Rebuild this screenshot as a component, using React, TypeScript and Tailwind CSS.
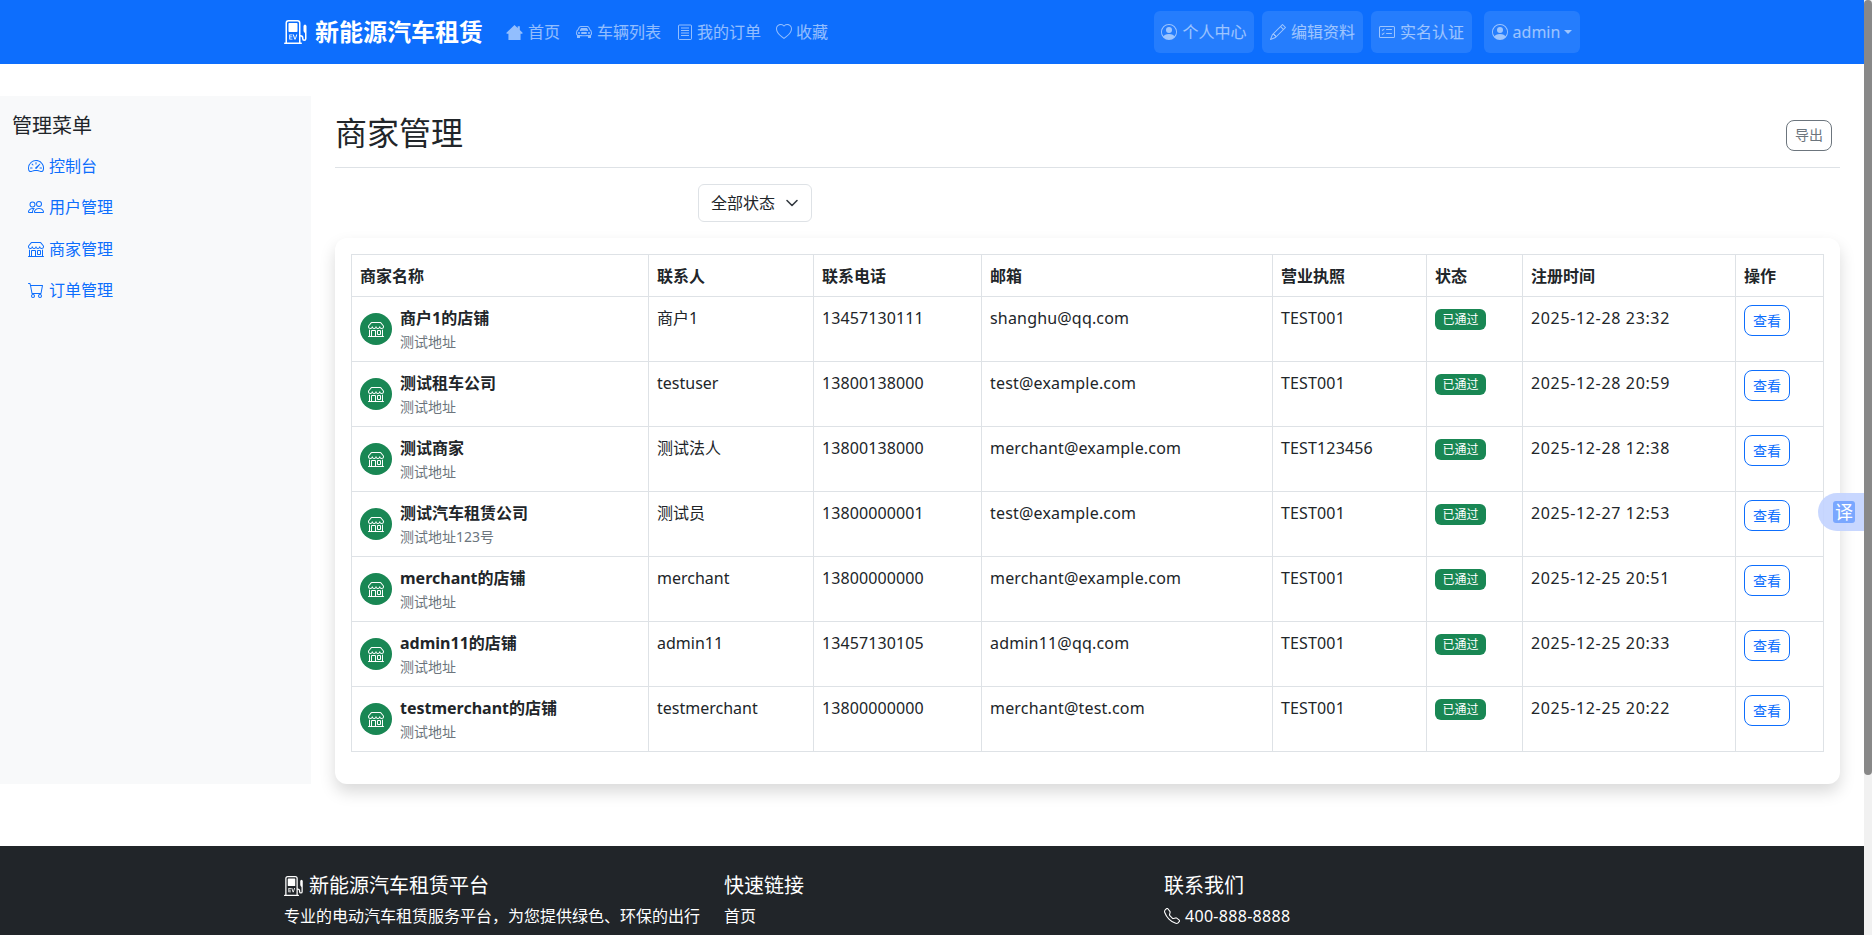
import type { ReactNode } from 'react';
import {
  BsCardChecklist,
  BsCarFront,
  BsCart,
  BsEvStation,
  BsHeart,
  BsPencil,
  BsPeople,
  BsPersonCircle,
  BsShop,
  BsSpeedometer2,
  BsTelephone,
} from 'react-icons/bs';

function HouseIcon() {
  return (
    <svg viewBox="0 0 16 16" className="h-[17px] w-[17px]" fill="currentColor">
      <path d="M8 1 11 3.8V2.2h2v3.5l2.8 2.7-.6.7h-1.5v5.9H2.3V9.1H.8l-.6-.7z" />
    </svg>
  );
}

function OrderIcon() {
  return (
    <svg viewBox="0 0 16 16" className="h-4 w-4" fill="none" stroke="currentColor">
      <rect x="1.5" y="1" width="13" height="14.5" rx="1" />
      <path d="M4 4h8M4 6.5h8M4 9h8M4 11.5h8" />
    </svg>
  );
}

const navLinks = [
  { label: '首页', icon: <HouseIcon />, gap: 'gap-[5px]', pad: 'pl-2 pr-[8px]' },
  { label: '车辆列表', icon: <BsCarFront />, gap: 'gap-[5px]', pad: 'px-2' },
  { label: '我的订单', icon: <OrderIcon />, gap: 'gap-[4px]', pad: 'pl-2 pr-[7px]' },
  { label: '收藏', icon: <BsHeart />, gap: 'gap-[4px]', pad: 'px-2' },
];

const sideLinks = [
  { label: '控制台', icon: <BsSpeedometer2 /> },
  { label: '用户管理', icon: <BsPeople /> },
  { label: '商家管理', icon: <BsShop /> },
  { label: '订单管理', icon: <BsCart /> },
];

const merchants = [
  ['商户1的店铺', '测试地址', '商户1', '13457130111', 'shanghu@qq.com', 'TEST001', '2025-12-28 23:32'],
  ['测试租车公司', '测试地址', 'testuser', '13800138000', 'test@example.com', 'TEST001', '2025-12-28 20:59'],
  ['测试商家', '测试地址', '测试法人', '13800138000', 'merchant@example.com', 'TEST123456', '2025-12-28 12:38'],
  ['测试汽车租赁公司', '测试地址123号', '测试员', '13800000001', 'test@example.com', 'TEST001', '2025-12-27 12:53'],
  ['merchant的店铺', '测试地址', 'merchant', '13800000000', 'merchant@example.com', 'TEST001', '2025-12-25 20:51'],
  ['admin11的店铺', '测试地址', 'admin11', '13457130105', 'admin11@qq.com', 'TEST001', '2025-12-25 20:33'],
  ['testmerchant的店铺', '测试地址', 'testmerchant', '13800000000', 'merchant@test.com', 'TEST001', '2025-12-25 20:22'],
];

function NavButton({ icon, children, width }: { icon: ReactNode; children: ReactNode; width: string }) {
  return (
    <a className={`flex h-[42px] items-center justify-center gap-[5px] rounded-md bg-white/10 text-white/55 ${width}`}>
      {icon}
      {children}
    </a>
  );
}

function Cell({ children, className = '' }: { children: ReactNode; className?: string }) {
  return <td className={`border border-[#dee2e6] px-2 pb-[7px] pt-2 align-top ${className}`}>{children}</td>;
}

export default function App() {
  return (
    <div className="relative flex h-screen overflow-hidden bg-white font-['Noto_Sans','Noto_Sans_CJK_SC',sans-serif] text-base leading-6 text-[#212529]">
      <div className="min-w-0 flex-1">
        {/* Navbar */}
        <header className="h-16 bg-[#0d6efd]">
          <div className="mx-auto flex h-full w-[1320px] items-center px-3">
            <a className="mr-[15px] flex items-center gap-[7px] text-2xl font-bold text-white">
              <BsEvStation />
              新能源汽车租赁
            </a>
            <nav className="flex items-center">
              {navLinks.map((link) => (
                <a key={link.label} className={`flex items-center text-white/55 ${link.gap} ${link.pad}`}>
                  {link.icon}
                  {link.label}
                </a>
              ))}
            </nav>
            <div className="ml-auto flex items-center">
              <div className="flex gap-2">
                <NavButton icon={<BsPersonCircle />} width="w-[100px]">个人中心</NavButton>
                <NavButton icon={<BsPencil />} width="w-[101px]">编辑资料</NavButton>
                <NavButton icon={<BsCardChecklist />} width="w-[101px]">实名认证</NavButton>
              </div>
              <div className="ml-3">
                <NavButton icon={<BsPersonCircle />} width="w-[96px]">
                  admin
                  <span className="ml-[-1px] border-x-[4.5px] border-t-[4.5px] border-x-transparent border-t-white/55" />
                </NavButton>
              </div>
            </div>
          </div>
        </header>

        <div className="mt-8 flex">
          {/* Sidebar */}
          <aside className="h-[688px] w-[311px] shrink-0 bg-[#f8f9fa] px-3 pt-[18px]">
            <h5 className="text-xl leading-6">管理菜单</h5>
            <ul className="mt-[7px]">
              {sideLinks.map((link) => (
                <li key={link.label}>
                  <a className="flex h-[41.5px] items-center gap-[5px] px-4 text-[#0d6efd]">
                    {link.icon}
                    {link.label}
                  </a>
                </li>
              ))}
            </ul>
          </aside>

          {/* Main */}
          <main className="min-w-0 flex-1 pl-6 pr-6 pt-4">
            <div className="flex h-[56px] items-center justify-between border-b border-[#dee2e6] pb-[13px] pr-2">
              <h1 className="text-[32px] leading-[38px]">商家管理</h1>
              <button className="mt-[4px] h-[31px] w-[46px] rounded-lg border border-[#6c757d] text-sm text-[#6c757d]">
                导出
              </button>
            </div>

            <div className="ml-[363px] mt-4 flex h-[38px] w-[114px] items-center justify-between rounded-md border border-[#dee2e6] pl-3 pr-[11px]">
              全部状态
              <svg viewBox="0 0 16 16" className="h-4 w-4" fill="none" stroke="#343a40" strokeWidth="1.6" strokeLinecap="round" strokeLinejoin="round">
                <path d="m3 5.5 5 5 5-5" />
              </svg>
            </div>

            <div className="mt-4 h-[546px] rounded-xl bg-white p-4 shadow-[0_8px_16px_rgba(0,0,0,0.15)]">
              <table className="w-[1472px] table-fixed border-collapse">
                <colgroup>
                  <col className="w-[297px]" />
                  <col className="w-[165px]" />
                  <col className="w-[168px]" />
                  <col className="w-[291px]" />
                  <col className="w-[154px]" />
                  <col className="w-[96px]" />
                  <col className="w-[213px]" />
                  <col className="w-[88px]" />
                </colgroup>
                <thead>
                  <tr>
                    {['商家名称', '联系人', '联系电话', '邮箱', '营业执照', '状态', '注册时间', '操作'].map((h) => (
                      <th key={h} className="h-[42px] border border-[#dee2e6] px-2 text-left font-bold">
                        {h}
                      </th>
                    ))}
                  </tr>
                </thead>
                <tbody>
                  {merchants.map((m) => (
                    <tr key={m[0]} className="h-[65px]">
                      <td className="border border-[#dee2e6] px-2 pb-[7px] pt-2 align-top">
                        <div className="flex items-start">
                          <div className="mr-2 mt-2 flex h-8 w-8 shrink-0 items-center justify-center rounded-full bg-[#198754] text-white">
                            <BsShop />
                          </div>
                          <div className="pt-[1px]">
                            <div className="font-bold">{m[0]}</div>
                            <div className="text-sm leading-6 text-[#6c757d]">{m[1]}</div>
                          </div>
                        </div>
                      </td>
                      <Cell className="!pt-[9px]">{m[2]}</Cell>
                      <Cell className="!pt-[9px] tracking-[0.1px]">{m[3]}</Cell>
                      <Cell className="!pt-[9px] tracking-[0.18px]">{m[4]}</Cell>
                      <Cell className="!pt-[9px] tracking-[0.15px]">{m[5]}</Cell>
                      <Cell>
                        <span className="mt-[4px] block h-[21px] w-[51px] rounded-md bg-[#198754] text-center text-xs leading-[21px] text-white">
                          已通过
                        </span>
                      </Cell>
                      <Cell className="!pt-[9px] tracking-[0.65px]">{m[6]}</Cell>
                      <Cell>
                        <button className="h-[31px] w-[46px] rounded-lg border border-[#0d6efd] text-sm text-[#0d6efd]">
                          查看
                        </button>
                      </Cell>
                    </tr>
                  ))}
                </tbody>
              </table>
            </div>
          </main>
        </div>

        {/* Footer */}
        <footer className="mt-[62px] h-[200px] bg-[#212529] text-white">
          <div className="mx-auto grid w-[1320px] grid-cols-[440px_440px_1fr] px-3 pt-[28px]">
            <div>
              <h5 className="flex items-center gap-[5px] text-xl leading-6">
                <BsEvStation />
                新能源汽车租赁平台
              </h5>
              <p className="mt-[6px]">专业的电动汽车租赁服务平台，为您提供绿色、环保的出行</p>
            </div>
            <div>
              <h5 className="text-xl leading-6">快速链接</h5>
              <p className="mt-[6px]">首页</p>
            </div>
            <div>
              <h5 className="text-xl leading-6">联系我们</h5>
              <p className="mt-[6px] flex items-center gap-[5px] tracking-[0.3px]">
                <BsTelephone />
                400-888-8888
              </p>
            </div>
          </div>
        </footer>
      </div>

      {/* Scrollbar */}
      <div className="w-2 shrink-0 bg-[#f1f1f1]">
        <div className="h-[775px] rounded-[4px] bg-[#888888]" />
      </div>

      {/* Translate widget */}
      <div className="absolute right-2 top-[493px] flex h-[38px] w-[46px] items-center rounded-l-full bg-[#c2d3ff]/90 pl-[15px]">
        <span className="flex h-[22px] w-[22px] items-center justify-center rounded-[3px] bg-[#7aa7ff] text-lg leading-none text-white">
          译
        </span>
      </div>
    </div>
  );
}
